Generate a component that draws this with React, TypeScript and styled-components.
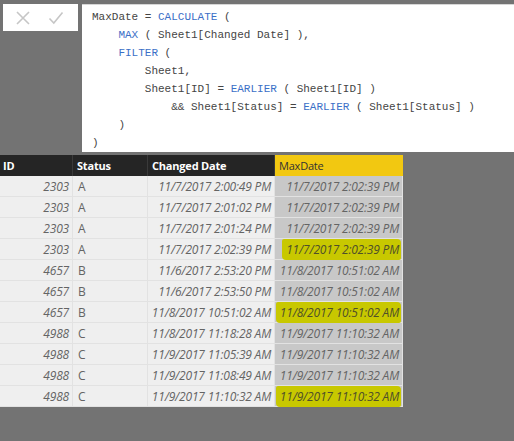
import styled, { createGlobalStyle } from 'styled-components';

const GlobalStyle = createGlobalStyle`
  html, body {
    margin: 0;
    padding: 0;
    background: #737373;
  }
  body {
    width: 514px;
    height: 441px;
    overflow: hidden;
    font-family: 'Open Sans', 'Noto Sans', sans-serif;
  }
`;

interface Row {
  id: string;
  status: string;
  changed: string;
  max: string;
  marked?: boolean;
}

const rows: Row[] = [
  { id: '2303', status: 'A', changed: '11/7/2017 2:00:49 PM', max: '11/7/2017 2:02:39 PM' },
  { id: '2303', status: 'A', changed: '11/7/2017 2:01:02 PM', max: '11/7/2017 2:02:39 PM' },
  { id: '2303', status: 'A', changed: '11/7/2017 2:01:24 PM', max: '11/7/2017 2:02:39 PM' },
  { id: '2303', status: 'A', changed: '11/7/2017 2:02:39 PM', max: '11/7/2017 2:02:39 PM', marked: true },
  { id: '4657', status: 'B', changed: '11/6/2017 2:53:20 PM', max: '11/8/2017 10:51:02 AM' },
  { id: '4657', status: 'B', changed: '11/6/2017 2:53:50 PM', max: '11/8/2017 10:51:02 AM' },
  { id: '4657', status: 'B', changed: '11/8/2017 10:51:02 AM', max: '11/8/2017 10:51:02 AM', marked: true },
  { id: '4988', status: 'C', changed: '11/8/2017 11:18:28 AM', max: '11/9/2017 11:10:32 AM' },
  { id: '4988', status: 'C', changed: '11/9/2017 11:05:39 AM', max: '11/9/2017 11:10:32 AM' },
  { id: '4988', status: 'C', changed: '11/9/2017 11:08:49 AM', max: '11/9/2017 11:10:32 AM' },
  { id: '4988', status: 'C', changed: '11/9/2017 11:10:32 AM', max: '11/9/2017 11:10:32 AM', marked: true },
];

export default function App() {
  return (
    <>
      <GlobalStyle />
      <Page>
        <TopBar>
          <Actions>
            <svg width="16" height="16" viewBox="0 0 16 16">
              <path d="M2 2 L14 14 M14 2 L2 14" stroke="#c6c6c6" strokeWidth="1.6" fill="none" />
            </svg>
            <svg width="16" height="16" viewBox="0 0 16 16">
              <path d="M1.5 8.5 L5.8 13 L14.5 2.5" stroke="#c6c6c6" strokeWidth="1.6" fill="none" />
            </svg>
          </Actions>
          <Formula>
            <Line>MaxDate = <Kw>CALCULATE</Kw> (</Line>
            <Line $indent={1}><Kw>MAX</Kw> ( Sheet1[Changed Date] ),</Line>
            <Line $indent={1}><Kw>FILTER</Kw> (</Line>
            <Line $indent={2}>Sheet1,</Line>
            <Line $indent={2}>Sheet1[ID] = <Kw>EARLIER</Kw> ( Sheet1[ID] )</Line>
            <Line $indent={3}>&amp;&amp; Sheet1[Status] = <Kw>EARLIER</Kw> ( Sheet1[Status] )</Line>
            <Line $indent={1}>)</Line>
            <Line>)</Line>
          </Formula>
        </TopBar>
        <Table>
          <HeadCell>ID</HeadCell>
          <HeadCell>Status</HeadCell>
          <HeadCell>Changed Date</HeadCell>
          <HeadCell $active>MaxDate</HeadCell>
          {rows.map((r, i) => (
            <RowGroup key={i}>
              <Cell $align="right" $italic>{r.id}</Cell>
              <Cell>{r.status}</Cell>
              <Cell $align="right" $italic>{r.changed}</Cell>
              <Cell $align="right" $italic $calc>
                {r.marked ? <Marker>{r.max}</Marker> : r.max}
              </Cell>
            </RowGroup>
          ))}
        </Table>
      </Page>
    </>
  );
}

const Page = styled.div`
  display: flex;
  flex-direction: column;
  padding-top: 4px;
`;

const TopBar = styled.div`
  display: flex;
  align-items: flex-start;
  gap: 4px;
  padding-left: 3px;
`;

const Actions = styled.div`
  width: 75px;
  height: 27px;
  background: #ffffff;
  display: flex;
  align-items: center;
  justify-content: space-around;
  padding: 0 6px 0 4px;
  box-sizing: border-box;
`;

const Formula = styled.div`
  flex: 1;
  height: 148px;
  background: #ffffff;
  border-top: 1px solid #d6d6d6;
  box-sizing: border-box;
  padding: 3px 0 0 10px;
  font-family: 'Liberation Mono', 'DejaVu Sans Mono', monospace;
  font-size: 11px;
  color: #444444;
`;

const Line = styled.div<{ $indent?: number }>`
  height: 18px;
  line-height: 18px;
  white-space: pre;
  padding-left: ${(p) => (p.$indent ?? 0) * 26.4}px;
`;

const Kw = styled.span`
  color: #3b6fc7;
`;

const Table = styled.div`
  margin-top: 3px;
  width: 403px;
  display: grid;
  grid-template-columns: 73px 75px 127px 128px;
  grid-auto-rows: 21px;
`;

const RowGroup = styled.div`
  display: contents;
`;

const HeadCell = styled.div<{ $active?: boolean }>`
  background: ${(p) => (p.$active ? '#f2c811' : '#252525')};
  color: ${(p) => (p.$active ? '#333333' : '#ffffff')};
  font-weight: ${(p) => (p.$active ? 400 : 700)};
  font-size: 11px;
  letter-spacing: -0.2px;
  display: flex;
  align-items: center;
  padding-left: 4px;
  border-right: 1px solid ${(p) => (p.$active ? '#f2c811' : '#3a3a3a')};
  &:first-child {
    padding-left: 3px;
  }
`;

const Cell = styled.div<{ $align?: 'right'; $italic?: boolean; $calc?: boolean }>`
  background: ${(p) => (p.$calc ? '#c8c8c8' : '#efefef')};
  color: #646464;
  font-size: 12px;
  font-style: ${(p) => (p.$italic ? 'italic' : 'normal')};
  letter-spacing: -0.2px;
  display: flex;
  align-items: center;
  justify-content: ${(p) => (p.$align === 'right' ? 'flex-end' : 'flex-start')};
  padding: 0 ${(p) => (p.$align === 'right' ? '3px' : '0')} 0 ${(p) => (p.$align === 'right' ? '0' : '5px')};
  border-right: 1px solid #e2e2e2;
  border-bottom: 1px solid #e2e2e2;
  box-sizing: border-box;
  white-space: nowrap;
`;

const Marker = styled.span`
  background: #c8c800;
  border-radius: 2px 4px 2px 4px;
  padding: 2px 2px 2px 4px;
  margin-right: -2px;
  color: #4f4f2a;
`;
